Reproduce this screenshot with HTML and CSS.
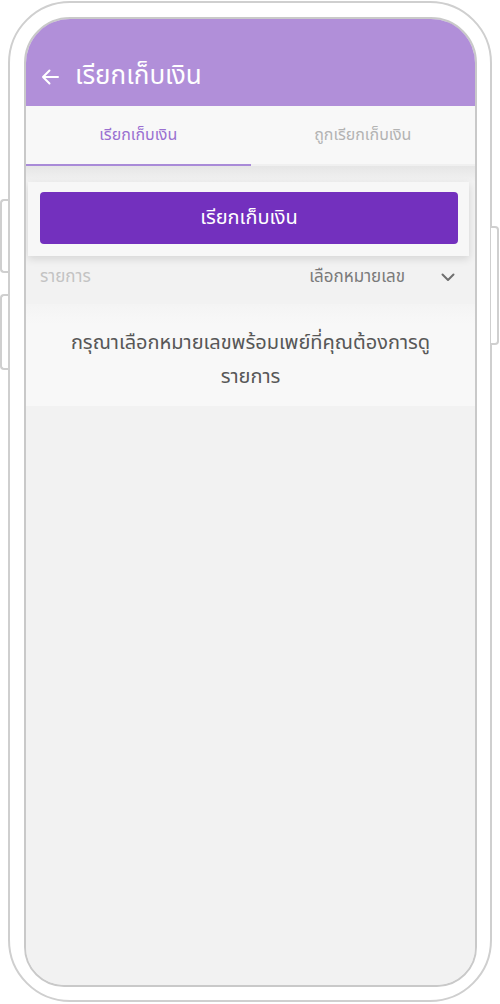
FILE: index.html
```html
<!DOCTYPE html>
<html lang="th">
<head>
<meta charset="UTF-8">
<meta name="viewport" content="width=device-width, initial-scale=1.0">
<title>เรียกเก็บเงิน</title>
<link rel="stylesheet" href="styles.css">
</head>
<body>
<div class="phone">
  <span class="side-key key-left-1"></span>
  <span class="side-key key-left-2"></span>
  <span class="side-key key-right"></span>
  <div class="screen">
    <div class="header">
      <svg class="back" width="20" height="18" viewBox="0 0 20 18">
        <path d="M18 9H3M9.5 2.5L3 9l6.5 6.5" fill="none" stroke="#fff" stroke-width="2" stroke-linecap="round" stroke-linejoin="round"/>
      </svg>
      <span class="title">เรียกเก็บเงิน</span>
    </div>
    <div class="tabs">
      <div class="tab active">เรียกเก็บเงิน</div>
      <div class="tab">ถูกเรียกเก็บเงิน</div>
    </div>
    <div class="content">
      <div class="card">
        <button class="request-btn">เรียกเก็บเงิน</button>
      </div>
      <div class="list-row">
        <span class="list-label">รายการ</span>
        <span class="picker">เลือกหมายเลข
          <svg width="14" height="9" viewBox="0 0 14 9">
            <path d="M1.5 1.5L7 7l5.5-5.5" fill="none" stroke="#6f6f6f" stroke-width="2" stroke-linecap="round" stroke-linejoin="round"/>
          </svg>
        </span>
      </div>
      <div class="empty-box">กรุณาเลือกหมายเลขพร้อมเพย์ที่คุณต้องการดู<br>รายการ</div>
    </div>
  </div>
</div>
</body>
</html>
```

FILE: styles.css
```css
body {
    margin: 0;
    padding: 0;
    background-color: #fff;
    font-family: "Noto Sans Thai", "Noto Sans", "DejaVu Sans", sans-serif;
}

.phone {
    position: relative;
    box-sizing: border-box;
    width: 484px;
    height: 1001px;
    margin: 1px 0 0 8px;
    padding: 14px 13px 13px 14px;
    border: 2px solid #cfcfcf;
    border-radius: 62px;
    background-color: #fff;
    display: flex;
    flex-direction: column;
}

/* side buttons of the phone body */
.side-key {
    position: absolute;
    width: 6px;
    border: 2px solid #cfcfcf;
    background-color: #fff;
}

.key-left-1 {
    left: -10px;
    top: 196px;
    height: 70px;
    border-right: none;
    border-radius: 4px 0 0 4px;
}

.key-left-2 {
    left: -10px;
    top: 291px;
    height: 72px;
    border-right: none;
    border-radius: 4px 0 0 4px;
}

.key-right {
    right: -9px;
    top: 223px;
    height: 115px;
    border-left: none;
    border-radius: 0 4px 4px 0;
}

.screen {
    flex: 1;
    border: 2px solid #c9c9c9;
    border-radius: 46px 46px 40px 40px;
    background-color: #f2f2f2;
    overflow: hidden;
    display: flex;
    flex-direction: column;
}

.header {
    height: 87px;
    box-sizing: border-box;
    padding: 39px 0 0 14px;
    background-color: #b18fd9;
    display: flex;
    align-items: flex-start;
    gap: 15px;
}

.back {
    margin-top: 10px;
}

.title {
    color: #fff;
    font-size: 26px;
    line-height: 36px;
}

.tabs {
    display: flex;
    background-color: #f8f8f8;
    border-bottom: 2px solid #f0f0f0;
}

.tab {
    flex: 1;
    height: 58px;
    display: flex;
    align-items: center;
    justify-content: center;
    font-size: 16px;
    color: #b3b3b3;
    border-bottom: 2px solid transparent;
    margin-bottom: -2px;
}

.tab.active {
    color: #9a70d1;
    border-bottom-color: #a98bd8;
}

.content {
    flex: 1;
    background: linear-gradient(#e6e6e6, #f2f2f2 16px);
    padding-top: 16px;
}

.card {
    margin: 0 6px 0 2px;
    padding: 10px 11px 12px 12px;
    background-color: #f7f7f7;
    box-shadow: 0 3px 8px rgba(0, 0, 0, 0.12);
}

.request-btn {
    display: block;
    width: 100%;
    height: 52px;
    border: none;
    border-radius: 4px;
    background-color: #7330be;
    color: #fff;
    font-family: inherit;
    font-size: 20px;
}

.list-row {
    display: flex;
    justify-content: space-between;
    align-items: center;
    height: 42px;
    padding: 0 20px 0 14px;
}

.list-label {
    color: #c3c3c3;
    font-size: 17px;
}

.picker {
    display: flex;
    align-items: center;
    gap: 36px;
    color: #7a7a7a;
    font-size: 17px;
}

.empty-box {
    margin-top: 6px;
    padding: 22px 6px 12px;
    background: linear-gradient(#f4f4f4, #f8f8f8 20px);
    color: #575757;
    font-size: 20px;
    line-height: 34px;
    text-align: center;
}
```
